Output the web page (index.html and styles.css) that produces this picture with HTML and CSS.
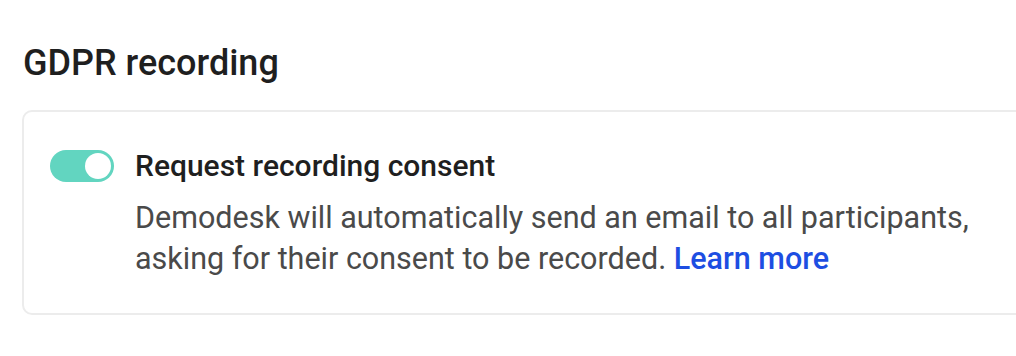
FILE: index.html
```html
<!DOCTYPE html>
<html lang="en">
<head>
    <meta charset="UTF-8">
    <meta name="viewport" content="width=device-width, initial-scale=1.0">
    <title>GDPR recording</title>
    <link rel="stylesheet" href="styles.css">
</head>
<body>
    <section class="settings">
        <h2 class="settings-title">GDPR recording</h2>
        <div class="card">
            <label class="toggle">
                <input type="checkbox" checked>
                <span class="slider"></span>
            </label>
            <div class="option">
                <div class="option-title">Request recording consent</div>
                <p class="option-desc">
                    Demodesk will automatically send an email to all participants,
                    asking for their consent to be recorded. <a href="#" class="link">Learn more</a>
                </p>
            </div>
        </div>
    </section>
</body>
</html>
```

FILE: styles.css
```css
* {
    margin: 0;
    padding: 0;
    box-sizing: border-box;
}

body {
    font-family: Roboto, "Liberation Sans", Arial, sans-serif;
    background-color: #fff;
    color: #1f1f1f;
    overflow: hidden;
}

.settings {
    padding: 43px 0 0 22px;
    width: 1100px;
}

.settings-title {
    font-size: 36px;
    font-weight: 500;
    line-height: 40px;
    margin-left: 1px;
    margin-bottom: 27px;
}

.card {
    display: flex;
    align-items: flex-start;
    gap: 21px;
    border: 2px solid #ececec;
    border-radius: 10px;
    padding: 36px 26px 34px 26px;
}

.toggle {
    position: relative;
    flex: none;
    width: 64px;
    height: 32px;
    margin-top: 2px;
    cursor: pointer;
}

.toggle input {
    display: none;
}

.slider {
    display: block;
    width: 100%;
    height: 100%;
    background-color: #62d5c0;
    border-radius: 16px;
}

.slider::after {
    content: "";
    position: absolute;
    top: 3px;
    right: 3px;
    width: 26px;
    height: 26px;
    border-radius: 50%;
    background-color: #fff;
}

.option-title {
    font-size: 30px;
    font-weight: 500;
    line-height: 36px;
    color: #1f1f1f;
}

.option-desc {
    max-width: 850px;
    margin-top: 13px;
    font-size: 30.5px;
    line-height: 41px;
    color: #4a4a4a;
}

.link {
    color: #1d4ee2;
    font-weight: 500;
    text-decoration: none;
}
```
